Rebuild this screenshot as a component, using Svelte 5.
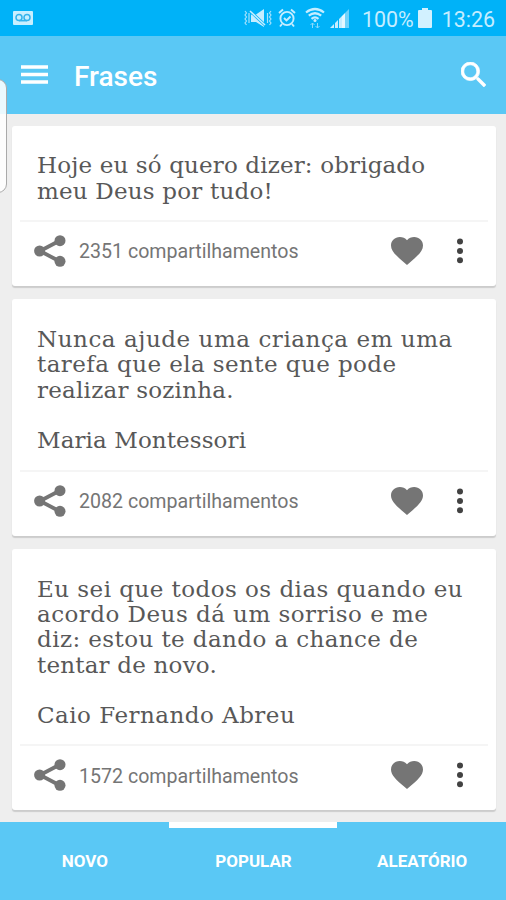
<script lang="ts">
  type Line = { text: string; spacing: number };
  type Phrase = { id: number; lines: Line[]; shares: number };

  // Letter spacing is tuned per line, in px
  const phrases: Phrase[] = [
    {
      id: 1,
      shares: 2351,
      lines: [
        { text: 'Hoje eu só quero dizer: obrigado', spacing: 0.14 },
        { text: 'meu Deus por tudo!', spacing: 0.2 }
      ]
    },
    {
      id: 2,
      shares: 2082,
      lines: [
        { text: 'Nunca ajude uma criança em uma', spacing: 0.55 },
        { text: 'tarefa que ela sente que pode', spacing: 0.42 },
        { text: 'realizar sozinha.', spacing: 0.22 },
        { text: '', spacing: 0 },
        { text: 'Maria Montessori', spacing: 0.1 }
      ]
    },
    {
      id: 3,
      shares: 1572,
      lines: [
        { text: 'Eu sei que todos os dias quando eu', spacing: 0.46 },
        { text: 'acordo Deus dá um sorriso e me', spacing: 0.47 },
        { text: 'diz: estou te dando a chance de', spacing: 0.41 },
        { text: 'tentar de novo.', spacing: 0.2 },
        { text: '', spacing: 0 },
        { text: 'Caio Fernando Abreu', spacing: 0.48 }
      ]
    }
  ];

  const tabs = ['Novo', 'Popular', 'Aleatório'];
  let current = $state('Popular');
</script>

<div class="screen">
  <div class="status">
    <svg class="voicemail" width="20" height="14" viewBox="0 0 20 14">
      <rect width="20" height="14" rx="1" fill="#c9efff" />
      <g fill="none" stroke="#35b3ec" stroke-width="1.5">
        <circle cx="6" cy="6.5" r="3" />
        <circle cx="14" cy="6.5" r="3" />
        <path d="M6 9.7h8" />
      </g>
    </svg>
    <div class="indicators">
      <svg width="28" height="20" viewBox="0 0 28 20">
        <g fill="none" stroke="#a5e2fd" stroke-width="1.2">
          <path d="M1 3l1.500 2-1.500 2 1.500 2-1.500 2 1.500 2-1.500 2 1.500 2M5 5v10M27 3l-1.500 2 1.500 2-1.500 2 1.500 2-1.500 2 1.500 2-1.500 2M23.500 5v10" />
        </g>
        <path d="M7 6.500h5l8-5.500v18l-8-5H7z" fill="#c6edff" />
        <path d="M6 3l15 14" stroke="#00b2f8" stroke-width="2.800" />
        <path d="M6 3l15 14" stroke="#c6edff" stroke-width="1.600" />
      </svg>
      <svg class="alarm" width="18" height="20" viewBox="0 0 18 20">
        <g fill="none" stroke="#c6edff" stroke-width="1.9">
          <circle cx="9" cy="10.500" r="6.600" />
          <path d="M1 5l4-3.500M17 5l-4-3.500M4 16l-2 2.500M14 16l2 2.500M6 10l2.500 2.500 4-4" />
        </g>
      </svg>
      <svg class="wifi" width="20" height="22" viewBox="0 0 20 22">
        <g fill="none" stroke="#c6edff" stroke-width="2.2">
          <path d="M1 5.500Q10-1.500 19 5.500M3.800 8.700Q10 3.800 16.200 8.700M6.500 11.800Q10 9 13.500 11.800" />
        </g>
        <circle cx="10" cy="13.500" r="1.500" fill="#c6edff" />
        <path d="M7.500 21v-5M5.500 18l2-2 2 2M12.500 16v5M10.500 19l2 2 2-2" fill="none" stroke="#8bdafb" />
      </svg>
      <svg class="signal" width="19" height="19" viewBox="0 0 19 19">
        <path d="M0 19L4 15V19zM5 19V14L8 11V19zM9 19V10L12 7V19z" fill="#c6edff" />
        <path d="M12 19V7L15 4V19z" fill="#e4f7ff" />
        <path d="M15 19V4L19 0V19z" fill="#6fd2fb" />
      </svg>
      <span class="level">100%</span>
      <svg class="battery" width="14" height="20" viewBox="0 0 14 20">
        <path d="M4 0h6v2h3a1 1 0 0 1 1 1v16a1 1 0 0 1-1 1H1a1 1 0 0 1-1-1V3a1 1 0 0 1 1-1h3z" fill="#d2f1ff" />
      </svg>
      <span class="clock">13:26</span>
    </div>
  </div>

  <header>
    <button class="menu" aria-label="Menu">
      <svg width="27" height="19" viewBox="0 0 27 19">
        <path d="M0 2h27M0 9.500h27M0 17h27" stroke="#fff" stroke-width="3.400" />
      </svg>
    </button>
    <h1>Frases</h1>
    <button class="search" aria-label="Buscar">
      <svg width="25" height="25" viewBox="3 3 17.500 17.500">
        <path
          fill="#fff"
          stroke="#fff"
          stroke-width="0.500"
          d="M15.500 14h-.79l-.28-.27A6.471 6.471 0 0 0 16 9.500 6.500 6.500 0 1 0 9.500 16c1.610 0 3.090-.59 4.230-1.570l.27.28v.79l5 4.990L20.490 19l-4.990-5zm-6 0C7.010 14 5 11.990 5 9.500S7.010 5 9.500 5 14 7.010 14 9.500 11.990 14 9.500 14z"
        />
      </svg>
    </button>
  </header>

  <main>
    {#each phrases as phrase (phrase.id)}
      <article>
        <div class="phrase">
          {#each phrase.lines as line}
            <p style="letter-spacing: {line.spacing}px">{line.text}</p>
          {/each}
        </div>
        <footer>
          <button class="share" aria-label="Compartilhar">
            <svg width="32" height="32" viewBox="0 0 32 32">
              <path d="M26 5.500L6 16l20 10.500" fill="none" stroke="#757575" stroke-width="3.800" />
              <g fill="#757575">
                <circle cx="26" cy="5.700" r="5.500" />
                <circle cx="5.600" cy="16" r="5.500" />
                <circle cx="26" cy="26.300" r="5.500" />
              </g>
            </svg>
          </button>
          <span class="count">{phrase.shares} compartilhamentos</span>
          <button class="like" aria-label="Curtir">
            <svg width="32" height="28" viewBox="2 3 20 18.350" preserveAspectRatio="none">
              <path
                fill="#757575"
                d="M12 21.350l-1.450-1.320C5.400 15.360 2 12.280 2 8.500 2 5.420 4.420 3 7.500 3c1.740 0 3.410.81 4.500 2.090C13.090 3.810 14.760 3 16.500 3 19.580 3 22 5.420 22 8.500c0 3.780-3.400 6.860-8.550 11.540L12 21.350z"
              />
            </svg>
          </button>
          <button class="more" aria-label="Mais">
            <svg width="6" height="26" viewBox="0 0 6 26">
              <g fill="#424242">
                <circle cx="3" cy="3.500" r="3" />
                <circle cx="3" cy="12.900" r="3" />
                <circle cx="3" cy="22.300" r="3" />
              </g>
            </svg>
          </button>
        </footer>
      </article>
    {/each}
  </main>

  <nav>
    {#each tabs as tab}
      <button class:active={tab === current} onclick={() => (current = tab)}>{tab}</button>
    {/each}
  </nav>

  <div class="edge-handle"></div>
</div>

<style>
  :global(body) {
    margin: 0;
  }

  .screen {
    position: relative;
    display: flex;
    flex-direction: column;
    width: 506px;
    height: 900px;
    overflow: hidden;
    background: #eee;
    font-family: Roboto, sans-serif;
  }

  button {
    border: 0;
    padding: 0;
    background: none;
    font: inherit;
    cursor: pointer;
  }

  svg {
    display: block;
  }

  .status {
    flex: 0 0 36px;
    display: flex;
    align-items: center;
    justify-content: space-between;
    padding: 0 11px 0 13px;
    background: #00b2f8;
    color: #c6edff;
    font-size: 21.400px;
  }

  .indicators {
    display: flex;
    align-items: center;
  }

  .alarm {
    margin-left: 6px;
  }

  .wifi {
    margin: 0 5px 0 9px;
  }

  .level {
    margin: 2px 4px 0 13px;
  }

  .clock {
    margin: 2px 0 0 10px;
  }

  header {
    flex: 0 0 78px;
    box-sizing: border-box;
    display: flex;
    align-items: center;
    padding: 0 20px 1px 21px;
    background: #5ac8f5;
  }

  h1 {
    flex: 1;
    margin: 4px 0 0 26px;
    color: #fff;
    font-size: 28px;
    font-weight: 500;
  }

  main {
    flex: 1;
    min-height: 0;
    overflow: hidden;
    display: flex;
    flex-direction: column;
    gap: 13.300px;
    padding: 11.600px 10px 0 12px;
  }

  article {
    flex: none;
    border-radius: 3px;
    background: #fff;
    box-shadow: 0 2px 1px #ccc;
  }

  .phrase {
    padding: 27.800px 0 16px 25px;
    color: #585858;
    font-family: 'DejaVu Serif', serif;
    font-size: 23px;
    line-height: 25.300px;
  }

  .phrase p {
    height: 25.300px;
    margin: 0;
    white-space: pre;
  }

  footer {
    display: flex;
    align-items: center;
    box-sizing: border-box;
    height: 66px;
    margin: 0 8px;
    padding: 0 25px 6px 14px;
    border-top: 2px solid #f5f5f5;
  }

  .count {
    flex: 1;
    margin: 2px 0 0 13px;
    color: #757575;
    font-size: 19.600px;
  }

  .more {
    margin-left: 34px;
  }

  nav {
    flex: 0 0 78.500px;
    display: flex;
    background: #5ac8f5;
  }

  nav button {
    flex: 1;
    box-sizing: border-box;
    border-top: 6px solid transparent;
    padding: 0 0 5px 1px;
    color: #fff;
    font-size: 17px;
    font-weight: 700;
    text-transform: uppercase;
  }

  nav button.active {
    border-top-color: #fff;
  }

  .edge-handle {
    position: absolute;
    top: 79px;
    left: -11px;
    box-sizing: border-box;
    width: 18px;
    height: 114px;
    border: 1px solid #aaa;
    border-radius: 9px;
    background: rgba(255, 255, 255, 0.88);
  }
</style>
